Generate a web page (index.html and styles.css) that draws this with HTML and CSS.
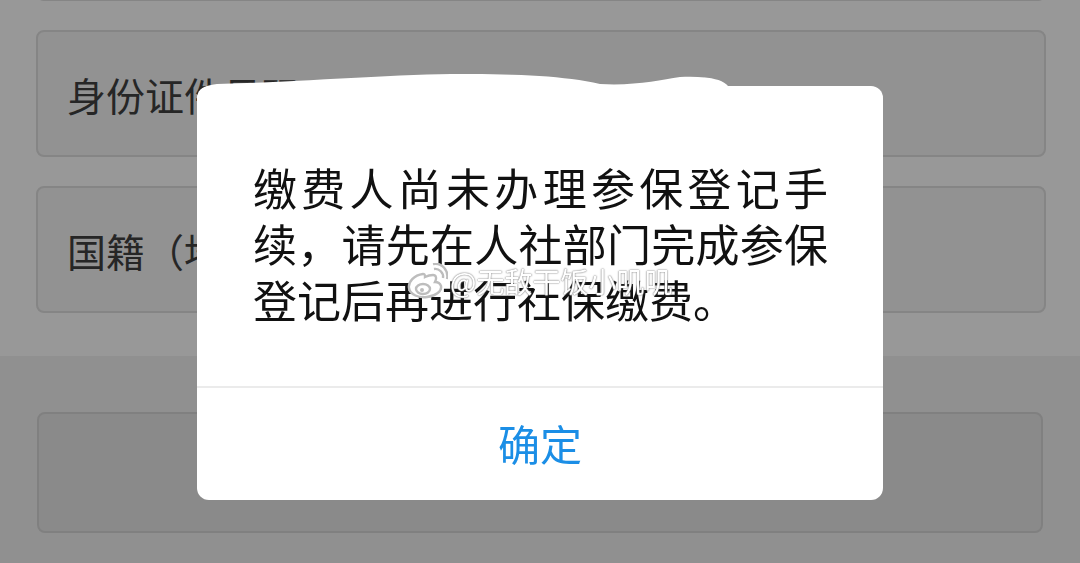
FILE: index.html
```html
<!DOCTYPE html>
<html>
<head>
  <meta charset="utf-8">
  <title>社保缴费</title>
  <link rel="stylesheet" href="styles.css">
</head>
<body>
  <div class="form">
    <div class="field cut"></div>
    <div class="field"><span class="label">身份证件号码</span></div>
    <div class="field"><span class="label">国籍（地区）</span></div>
  </div>
  <div class="footer">
    <div class="submit"></div>
  </div>

  <!-- white scribble that hides the id number -->
  <svg class="scribble" viewBox="195 70 540 30" width="540" height="30">
    <path d="M197,100 C197,92 203,85 217,84 C300,82 400,74 460,74 C520,74 565,76 600,84 C635,86 660,80 680,77 C702,76 722,78 728,86 L728,100 Z" fill="#fff"/>
  </svg>

  <div class="dialog">
    <div class="msg">缴费人尚未办理参保登记手续，请先在人社部门完成参保登记后再进行社保缴费。</div>
    <div class="ok">确定</div>
    <div class="mark">
      <svg width="42" height="36" viewBox="0 0 42 36">
        <g fill="none" stroke="#bdbdbd" stroke-width="2.4">
          <path d="M17 11 C8 12 2 19 3 25 C4 32 13 35 21 34 C30 33 36 28 35 23 C34 20 31 19 29 19 C31 15 30 12 27 12 C24 12 21 13 19 14 C19 12 19 11 17 11 Z" fill="#fff"/>
          <ellipse cx="17" cy="26" rx="7" ry="5" fill="#fff"/>
          <path d="M28 6 C33 5 38 10 37 15"/>
          <path d="M27 1 C36 -1 43 8 41 16"/>
        </g>
        <circle cx="16" cy="27" r="2" fill="#bdbdbd"/>
      </svg>
      <span>@无敌干饭小叽叽</span>
    </div>
  </div>
</body>
</html>
```

FILE: styles.css
```css
body { margin: 0; background: #909090; font-family: "Noto Sans CJK SC", "Noto Sans", sans-serif; overflow: hidden; }
.form { background: #989898; height: 356px; padding: 0 34px 0 36px; box-sizing: border-box; display: flex; flex-direction: column; gap: 29px; }
.field { height: 127px; flex: none; box-sizing: border-box; background: #929292; border: 2px solid #858585; border-radius: 8px; display: flex; align-items: center; padding-left: 29px; }
.field.cut { margin-top: -126px; }
.label { font-size: 39px; color: #262626; }
.footer { height: 207px; padding: 56px 37px 0 37px; box-sizing: border-box; }
.submit { height: 121px; box-sizing: border-box; background: #8a8a8a; border: 2px solid #808080; border-radius: 8px; }
.scribble { position: fixed; left: 195px; top: 70px; }
.dialog { position: fixed; left: 197px; top: 86px; width: 686px; height: 414px; background: #fff; border-radius: 12px; overflow: hidden; display: flex; flex-direction: column; }
.msg { padding: 73px 55px 0 56px; height: 302px; box-sizing: border-box; font-size: 44px; line-height: 56px; color: #111; text-align: justify; border-bottom: 2px solid #ebebeb; }
.ok { flex: 1; display: flex; align-items: center; justify-content: center; font-size: 42px; color: #1b8ee6; padding-bottom: 4px; }
.mark { position: absolute; left: 209px; top: 175px; display: flex; align-items: center; gap: 2px; }
.mark span { font-size: 28px; color: #fff; text-shadow: 0 0 2px #888, 0 0 1px #777; }
```
